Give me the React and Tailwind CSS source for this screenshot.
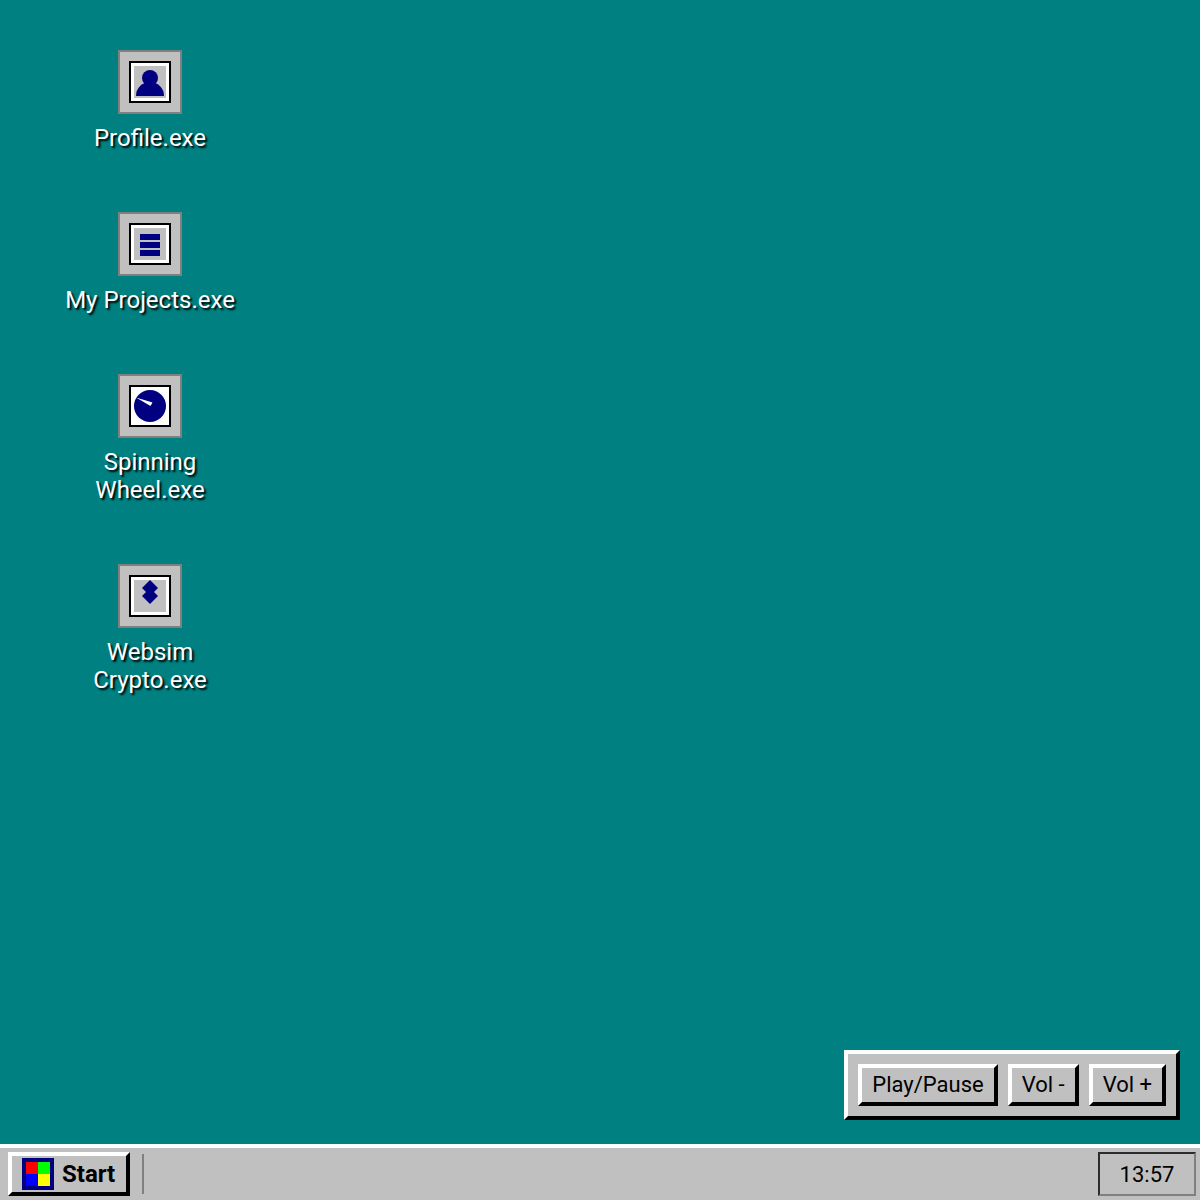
import React, { useState } from "react";

const ProfileIcon = () => (
  <>
    <rect x="16" y="16" width="32" height="32" fill="#c0c0c0" />
    <circle cx="32" cy="28" r="8" fill="#000080" />
    <path d="M18 46a14 14 0 0 1 28 0z" fill="#000080" />
  </>
);

const ProjectsIcon = () => (
  <>
    <rect x="16" y="16" width="32" height="32" fill="#c0c0c0" />
    <path d="M22 22h20v6H22zM22 30h20v6H22zM22 38h20v6H22z" fill="#000080" />
  </>
);

const WheelIcon = () => (
  <>
    <circle cx="32" cy="32" r="16" fill="#000080" />
    <path d="M18 23.5L34.5 28.5L32.5 32z" fill="#fff" />
  </>
);

const CryptoIcon = () => (
  <>
    <rect x="16" y="16" width="32" height="32" fill="#c0c0c0" />
    <path d="M32 16l8 8-8 8-8-8zM32 24l8 8-8 8-8-8z" fill="#000080" />
  </>
);

const apps = [
  { name: "Profile.exe", Icon: ProfileIcon },
  { name: "My Projects.exe", Icon: ProjectsIcon },
  { name: "Spinning Wheel.exe", Icon: WheelIcon },
  { name: "Websim Crypto.exe", Icon: CryptoIcon },
];

const DesktopIcon = ({ name, Icon }) => (
  <button
    type="button"
    className="flex w-[200px] cursor-pointer flex-col items-center gap-[10px]"
  >
    <span className="block size-16 border-2 border-[#808080] bg-[#c0c0c0]">
      <svg viewBox="2 2 60 60" className="block size-full" aria-hidden="true">
        <rect x="11" y="11" width="42" height="42" fill="#000" />
        <rect x="13" y="13" width="38" height="38" fill="#fff" />
        <Icon />
      </svg>
    </span>
    <span className="text-center text-[24px] leading-[28px] text-white [text-shadow:2px_2px_2px_#000]">
      {name}
    </span>
  </button>
);

const PlayerButton = ({ children, onClick }) => (
  <button
    type="button"
    onClick={onClick}
    className="cursor-pointer border-4 border-t-white border-r-black border-b-black border-l-white bg-[#c0c0c0] px-[10px] py-1 text-[22px] leading-[26px]"
  >
    {children}
  </button>
);

const App = () => {
  const [playing, setPlaying] = useState(false);
  const [volume, setVolume] = useState(5);

  return (
    <div className="relative flex min-h-screen flex-col bg-[#008080] font-[Roboto,sans-serif] text-black">
      {/* Desktop */}
      <main className="flex flex-1 flex-col items-start gap-[60px] p-[50px]">
        {apps.map((app) => (
          <DesktopIcon key={app.name} name={app.name} Icon={app.Icon} />
        ))}
      </main>

      {/* Music player */}
      <div
        data-playing={playing}
        data-volume={volume}
        className="absolute right-5 bottom-20 flex gap-[10px] border-4 border-t-white border-r-black border-b-black border-l-white bg-[#c0c0c0] p-[10px]"
      >
        <PlayerButton onClick={() => setPlaying(!playing)}>
          Play/Pause
        </PlayerButton>
        <PlayerButton onClick={() => setVolume(Math.max(0, volume - 1))}>
          Vol -
        </PlayerButton>
        <PlayerButton onClick={() => setVolume(Math.min(10, volume + 1))}>
          Vol +
        </PlayerButton>
      </div>

      {/* Taskbar */}
      <footer className="flex items-center gap-3 border-t-4 border-white bg-[#c0c0c0] py-1 pr-1 pl-2">
        <button
          type="button"
          className="flex min-w-[122px] cursor-pointer items-center gap-2 border-4 border-t-white border-r-black border-b-black border-l-white px-[10px] py-[2px] text-[24px] leading-[28px] font-bold"
        >
          <svg viewBox="0 0 32 32" className="size-8" aria-hidden="true">
            <rect width="32" height="32" fill="#000080" />
            <rect x="4" y="4" width="12" height="12" fill="#f00" />
            <rect x="16" y="4" width="12" height="12" fill="#0f0" />
            <rect x="4" y="16" width="12" height="12" fill="#00f" />
            <rect x="16" y="16" width="12" height="12" fill="#ff0" />
          </svg>
          Start
        </button>
        <div className="h-10 w-[2px] bg-[#808080]"></div>
        <time className="ml-auto h-11 min-w-[98px] border-2 border-t-[#2c2c2c] border-r-[#808080] border-b-[#808080] border-l-[#2c2c2c] px-4 text-center text-[22px] leading-[41px]">
          13:57
        </time>
      </footer>
    </div>
  );
};

export default App;
